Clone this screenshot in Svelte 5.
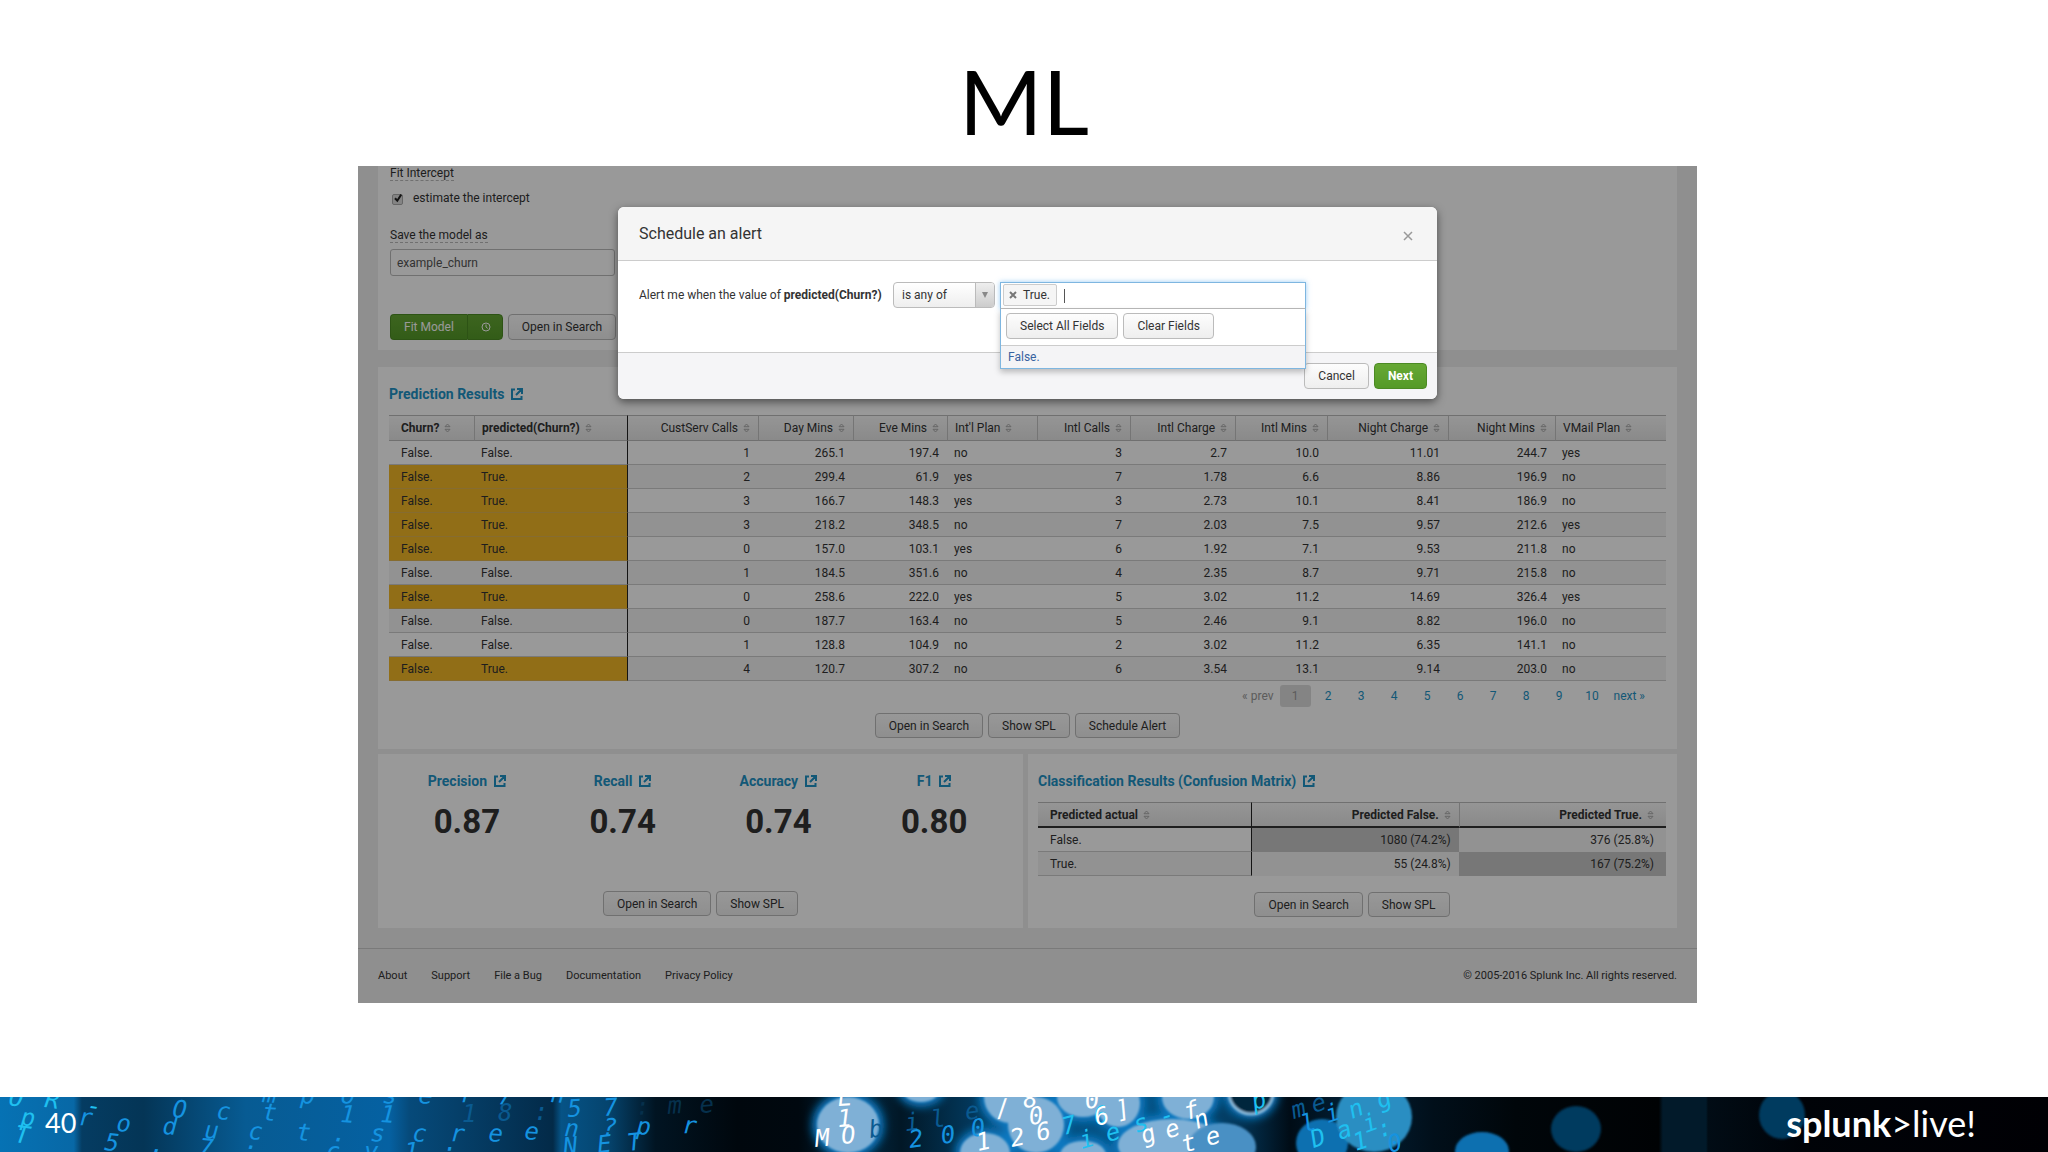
<script lang="ts">
	let modelName = $state('example_churn');
	let fitIntercept = $state(true);
	let condition = $state('is any of');
	let query = $state('');

	const columns = [
		{ label: 'Churn?', width: 85, key: true },
		{ label: 'predicted(Churn?)', width: 154, key: true },
		{ label: 'CustServ Calls', width: 130, num: true },
		{ label: 'Day Mins', width: 95, num: true },
		{ label: 'Eve Mins', width: 94, num: true },
		{ label: "Int'l Plan", width: 90 },
		{ label: 'Intl Calls', width: 93, num: true },
		{ label: 'Intl Charge', width: 105, num: true },
		{ label: 'Intl Mins', width: 92, num: true },
		{ label: 'Night Charge', width: 121, num: true },
		{ label: 'Night Mins', width: 107, num: true },
		{ label: 'VMail Plan', width: 111 }
	];

	const rows = [
		['False.', 'False.', '1', '265.1', '197.4', 'no', '3', '2.7', '10.0', '11.01', '244.7', 'yes'],
		['False.', 'True.', '2', '299.4', '61.9', 'yes', '7', '1.78', '6.6', '8.86', '196.9', 'no'],
		['False.', 'True.', '3', '166.7', '148.3', 'yes', '3', '2.73', '10.1', '8.41', '186.9', 'no'],
		['False.', 'True.', '3', '218.2', '348.5', 'no', '7', '2.03', '7.5', '9.57', '212.6', 'yes'],
		['False.', 'True.', '0', '157.0', '103.1', 'yes', '6', '1.92', '7.1', '9.53', '211.8', 'no'],
		['False.', 'False.', '1', '184.5', '351.6', 'no', '4', '2.35', '8.7', '9.71', '215.8', 'no'],
		['False.', 'True.', '0', '258.6', '222.0', 'yes', '5', '3.02', '11.2', '14.69', '326.4', 'yes'],
		['False.', 'False.', '0', '187.7', '163.4', 'no', '5', '2.46', '9.1', '8.82', '196.0', 'no'],
		['False.', 'False.', '1', '128.8', '104.9', 'no', '2', '3.02', '11.2', '6.35', '141.1', 'no'],
		['False.', 'True.', '4', '120.7', '307.2', 'no', '6', '3.54', '13.1', '9.14', '203.0', 'no']
	];

	const stats = [
		{ label: 'Precision', value: '0.87' },
		{ label: 'Recall', value: '0.74' },
		{ label: 'Accuracy', value: '0.74' },
		{ label: 'F1', value: '0.80' }
	];

	const pages = [2, 3, 4, 5, 6, 7, 8, 9, 10];
	const footerLinks = ['About', 'Support', 'File a Bug', 'Documentation', 'Privacy Policy'];

	// log characters on the banner artwork: text, x and baseline of each glyph, tilt, tone
	const glyphs = [
		{ t: 'OR-', x: '8 44 86', y: '8 10 16', r: 8, c: 'cyan' },
		{ t: 'mposer/n', x: '262 300 340 382 418 460 500 550', y: '5 6 6 6 6 5 5 5', r: 4, c: 'blue' },
		{ t: 'Oct', x: '172 216 262', y: '20 22 23', r: 4, c: 'blue' },
		{ t: '11', x: '340 380', y: '25', r: 4, c: 'blue' },
		{ t: '18:', x: '462 498 534', y: '25 24 23', r: 0, c: 'deep' },
		{ t: '57', x: '568 604', y: '20 19', r: -4, c: 'blue' },
		{ t: ':me', x: '636 668 700', y: '18 17 16', r: -4, c: 'faint' },
		{ t: 'p', x: '20', y: '28', r: 6, c: 'cyan' },
		{ t: 'roduct.screen?pr', x: '78 116 162 204 248 296 332 370 412 450 488 524 564 602 636 682', y: '28 34 37 41 42 43 44 44 44 44 44 42 39 38 37 36', r: 4, c: 'blue' },
		{ t: 'T', x: '14', y: '45', r: 8, c: 'cyan' },
		{ t: '5.7:', x: '104 150 198 242', y: '53 55 58 60', r: 6, c: 'blue' },
		{ t: 'cy1:', x: '326 364 404 442', y: '63', r: 0, c: 'blue' },
		{ t: 'NET', x: '564 598 628', y: '58 56 54', r: -6, c: 'blue' },
		{ t: 'bile', x: '870 906 932 966', y: '41 34 31 23', r: -8, c: 'deep' },
		{ t: '200', x: '910 942 972', y: '51 47 40', r: -8, c: 'blue' },
		{ t: '76', x: '1064 1096', y: '38 28', r: -14, c: 'cyan' },
		{ t: 'ies-', x: '1082 1108 1136 1162', y: '52 45 36 28', r: -16, c: 'cyan' },
		{ t: 'p', x: '1254', y: '13', r: -16, c: 'cyan' },
		{ t: 'me', x: '1294 1314', y: '22 16', r: -18, c: 'deep' },
		{ t: 'li', x: '1304 1328', y: '36 26', r: -18, c: 'blue' },
		{ t: 'Dai', x: '1314 1340 1366', y: '51 43 36', r: -20, c: 'cyan' },
		{ t: 'ng', x: '1352 1380', y: '22 12', r: -22, c: 'cyan' },
		{ t: '1:', x: '1356 1380', y: '54 41', r: -18, c: 'cyan' },
		{ t: '0', x: '1390', y: '56', r: -16, c: 'blue' },
		{ t: 'L', x: '838', y: '9', r: -4, c: 'white' },
		{ t: '1', x: '838', y: '30', r: -4, c: 'white' },
		{ t: 'MO', x: '816 842', y: '50 47', r: -6, c: 'white' },
		{ t: '/8', x: '997 1024', y: '20 11', r: -8, c: 'white' },
		{ t: '0', x: '1030', y: '28', r: -8, c: 'white' },
		{ t: '26', x: '1012 1038', y: '50 44', r: -12, c: 'white' },
		{ t: '1', x: '978', y: '54', r: -12, c: 'white' },
		{ t: '0', x: '1086', y: '12', r: -8, c: 'white' },
		{ t: '6]', x: '1097 1118', y: '29 22', r: -16, c: 'white' },
		{ t: 'f', x: '1186', y: '23', r: -14, c: 'white' },
		{ t: 'gen', x: '1144 1168 1197', y: '47 42 32', r: -20, c: 'white' },
		{ t: 'te', x: '1184 1208', y: '56 49', r: -16, c: 'white' }
	];
	const bubbles = [
		[848, 28, 31, 28, 'pale'], [921, -8, 19, 13, 'pale'], [1010, 0, 26, 26, 'pale'],
		[1036, 28, 28, 28, 'pale'], [1083, 0, 26, 20, 'pale'], [1118, 6, 22, 24, 'pale'],
		[985, 56, 25, 20, 'pale'], [1083, 58, 23, 14, 'pale'], [1188, 0, 26, 22, 'pale'],
		[1172, 48, 54, 26, 'pale'], [1222, 50, 34, 24, 'haze'], [1251, -4, 22, 21, 'ring'],
		[1322, 46, 26, 24, 'mid'], [1374, 20, 38, 35, 'teal'], [1482, 54, 27, 19, 'mid'],
		[1576, 32, 25, 23, 'dark'], [1782, 18, 23, 24, 'dark']
	];
</script>

{#snippet external()}
	<svg class="external" viewBox="0 0 12 12" aria-hidden="true">
		<path d="M4 1.5H1v9.5h9.5V8M6 1h5v5M11 1L5 7" />
	</svg>
{/snippet}

{#snippet sorter()}
	<svg class="sorter" viewBox="0 0 7 10" aria-hidden="true">
		<path d="M1 3.7L3.5 1 6 3.7zM1 6.3L3.5 9 6 6.3z" />
	</svg>
{/snippet}

<div class="slide">
	<h1>ML</h1>

	<div class="stage">
		<div class="app">
			<section class="panel form-panel">
				<div class="caption">Fit Intercept</div>
				<label class="check">
					<input type="checkbox" bind:checked={fitIntercept} />
					<svg viewBox="0 0 12 12" aria-hidden="true"><path d="M3 6.2l2.3 2.5L9.2 2.6" /></svg>
					estimate the intercept
				</label>
				<label class="caption model-label" for="model">Save the model as</label>
				<input class="model-input" id="model" type="text" bind:value={modelName} />
				<div class="form-actions">
					<div class="btn-group">
						<button class="btn primary" type="button">Fit Model</button>
						<button class="btn primary clock" type="button" aria-label="Schedule training">
							<svg viewBox="0 0 10 10" aria-hidden="true"><circle cx="5" cy="5" r="4" /><path d="M5 2.5V5l1.7 1.4" /></svg>
						</button>
					</div>
					<button class="btn" type="button">Open in Search</button>
				</div>
			</section>

			<section class="panel results">
				<h2><a href="#results">Prediction Results {@render external()}</a></h2>
				<table>
					<colgroup>
						{#each columns as col}
							<col style="width: {col.width}px" />
						{/each}
					</colgroup>
					<thead>
						<tr>
							{#each columns as col}
								<th class:key={col.key} class:num={col.num}>{col.label} {@render sorter()}</th>
							{/each}
						</tr>
					</thead>
					<tbody>
						{#each rows as row}
							<tr>
								{#each row as cell, i}
									<td class:num={columns[i].num} class:hit={i < 2 && row[0] !== row[1]}>{cell}</td>
								{/each}
							</tr>
						{/each}
					</tbody>
				</table>
				<nav class="pager" aria-label="Pages">
					<span class="prev">« prev</span>
					<span class="page current">1</span>
					{#each pages as page}
						<a class="page" href="#page-{page}">{page}</a>
					{/each}
					<a class="next" href="#page-2">next »</a>
				</nav>
				<div class="actions">
					<button class="btn" type="button">Open in Search</button>
					<button class="btn" type="button">Show SPL</button>
					<button class="btn" type="button">Schedule Alert</button>
				</div>
			</section>

			<div class="split">
				<section class="panel">
					<div class="stats">
						{#each stats as stat}
							<div class="stat">
								<h2><a href="#{stat.label}">{stat.label} {@render external()}</a></h2>
								<div class="value">{stat.value}</div>
							</div>
						{/each}
					</div>
					<div class="actions">
						<button class="btn" type="button">Open in Search</button>
						<button class="btn" type="button">Show SPL</button>
					</div>
				</section>
				<section class="panel">
					<h2><a href="#confusion">Classification Results (Confusion Matrix) {@render external()}</a></h2>
					<table class="matrix">
						<thead>
							<tr>
								<th class="key first">Predicted actual {@render sorter()}</th>
								<th class="key num">Predicted False. {@render sorter()}</th>
								<th class="key num">Predicted True. {@render sorter()}</th>
							</tr>
						</thead>
						<tbody>
							<tr><td>False.</td><td class="num heavy">1080 (74.2%)</td><td class="num light">376 (25.8%)</td></tr>
							<tr><td>True.</td><td class="num light">55 (24.8%)</td><td class="num heavy">167 (75.2%)</td></tr>
						</tbody>
					</table>
					<div class="actions">
						<button class="btn" type="button">Open in Search</button>
						<button class="btn" type="button">Show SPL</button>
					</div>
				</section>
			</div>

			<footer class="app-footer">
				{#each footerLinks as link}
					<a href="#footer">{link}</a>
				{/each}
				<span>© 2005-2016 Splunk Inc. All rights reserved.</span>
			</footer>

			<div class="backdrop"></div>

			<div class="modal" role="dialog" aria-labelledby="modal-title">
				<header>
					<h3 id="modal-title">Schedule an alert</h3>
					<button class="close" type="button" aria-label="Close">
						<svg viewBox="0 0 10 10" aria-hidden="true"><path d="M1 1l8 8M9 1L1 9" /></svg>
					</button>
				</header>
				<div class="modal-body">
					<label for="condition">Alert me when the value of <strong>predicted(Churn?)</strong></label>
					<div class="select">
						<select id="condition" bind:value={condition}>
							<option>is any of</option>
							<option>is not any of</option>
						</select>
						<span class="arrow"><svg viewBox="0 0 6 6" aria-hidden="true"><path d="M0 0h6L3 6z" /></svg></span>
					</div>
					<div class="multi">
						<div class="tokens">
							<span class="token">
								<button type="button" aria-label="Remove True.">
									<svg viewBox="0 0 8 8" aria-hidden="true"><path d="M1 1l6 6M7 1L1 7" /></svg>
								</button>
								True.
							</span>
							<span class="caret"></span>
							<input type="text" aria-label="Values" bind:value={query} />
						</div>
						<div class="menu">
							<div class="menu-actions">
								<button class="btn" type="button">Select All Fields</button>
								<button class="btn" type="button">Clear Fields</button>
							</div>
							<button class="option" type="button">False.</button>
						</div>
					</div>
				</div>
				<div class="modal-footer">
					<button class="btn" type="button">Cancel</button>
					<button class="btn primary next-btn" type="button">Next</button>
				</div>
			</div>
		</div>
	</div>

	<div class="banner">
		<svg class="art" viewBox="0 0 2048 55" preserveAspectRatio="xMidYMid slice" aria-hidden="true">
			<defs>
				<linearGradient id="sky">
					<stop offset="0" stop-color="#0672b4" />
					<stop offset=".036" stop-color="#0868a6" />
					<stop offset=".04" stop-color="#053c62" />
					<stop offset=".07" stop-color="#043556" />
					<stop offset=".12" stop-color="#075b93" />
					<stop offset=".19" stop-color="#0561a2" />
					<stop offset=".2" stop-color="#064a7a" />
					<stop offset=".27" stop-color="#032a48" />
					<stop offset=".274" stop-color="#065386" />
					<stop offset=".297" stop-color="#05446e" />
					<stop offset=".32" stop-color="#011422" />
					<stop offset=".36" stop-color="#00070d" />
					<stop offset=".39" stop-color="#00080f" />
					<stop offset=".42" stop-color="#022a44" />
					<stop offset=".44" stop-color="#011726" />
					<stop offset=".49" stop-color="#034672" />
					<stop offset=".55" stop-color="#04558a" />
					<stop offset=".6" stop-color="#033c62" />
					<stop offset=".63" stop-color="#000c16" />
					<stop offset=".66" stop-color="#022138" />
					<stop offset=".7" stop-color="#010f1a" />
					<stop offset=".74" stop-color="#00060a" />
					<stop offset=".81" stop-color="#000204" />
					<stop offset=".812" stop-color="#021a2a" />
					<stop offset=".833" stop-color="#021a2a" />
					<stop offset=".834" stop-color="#010c15" />
					<stop offset=".88" stop-color="#000308" />
					<stop offset="1" stop-color="#000004" />
				</linearGradient>
				<filter id="soft" x="-20%" y="-20%" width="140%" height="140%"><feGaussianBlur stdDeviation="1" /></filter>
				<filter id="glow" x="-20%" y="-50%" width="140%" height="200%"><feGaussianBlur stdDeviation="4" /></filter>
			</defs>
			<rect width="2048" height="55" fill="url(#sky)" />
			<g filter="url(#glow)">
				{#each bubbles as [cx, cy, rx, ry, tone]}
					{#if tone === 'pale' || tone === 'ring'}
						<ellipse class="halo" {cx} {cy} {rx} {ry} />
					{/if}
				{/each}
			</g>
			<g filter="url(#soft)">
				{#each bubbles as [cx, cy, rx, ry, tone]}
					<ellipse class={tone} {cx} {cy} {rx} {ry} />
				{/each}
			</g>
			{#each glyphs as g}
				<text class={g.c} x={g.x} y={g.y} rotate={g.r}>{g.t}</text>
			{/each}
		</svg>
		<span class="slide-no">40</span>
		<span class="logo"><b>splunk</b>&gt;live!</span>
	</div>
</div>

<style>
	:global(body) {
		background: #fff;
	}

	.slide {
		display: flex;
		flex-direction: column;
		min-height: 100vh;
		font: 12px/16px Roboto, "Liberation Sans", sans-serif;
		color: #333;
	}

	.slide * {
		box-sizing: border-box;
	}

	h1 {
		margin: 0;
		padding-top: 48px;
		height: 166px;
		font: 400 90px/104px Lato, sans-serif;
		color: #000;
		text-align: center;
	}

	h2 {
		margin: 0 0 11px;
		font-size: 14px;
		line-height: 20px;
		font-weight: 700;
	}

	h2 a {
		display: inline-flex;
		align-items: center;
		gap: 7px;
	}

	a {
		color: #1e93c6;
		text-decoration: none;
	}

	button,
	input,
	select {
		font: inherit;
		color: inherit;
	}

	.stage {
		padding: 0 351px 0 358px;
	}

	.app {
		position: relative;
		background: #eee;
	}

	.panel {
		margin: 0 20px;
		padding: 17px 11px 11px;
		background: #fff;
	}

	.form-panel {
		padding: 0 12px 10px;
		margin-bottom: 17px;
	}

	.caption {
		display: table;
		line-height: 14px;
		border-bottom: 1px dashed #bbb;
	}

	.check {
		display: flex;
		align-items: center;
		position: relative;
		margin-top: 9px;
	}

	.check input {
		appearance: none;
		width: 11px;
		height: 11px;
		margin: 2px 10px 0 2px;
		border: 1px solid #aaa;
		border-radius: 2px;
		background: #ddd;
	}

	.check svg {
		position: absolute;
		left: 2px;
		top: 2px;
		width: 12px;
		fill: none;
		stroke: #222;
		stroke-width: 2;
	}

	.model-label {
		margin-top: 22px;
	}

	.model-input {
		width: 225px;
		height: 27px;
		margin-top: 6px;
		padding: 0 6px;
		border: 1px solid #bbb;
		border-radius: 3px;
		background: #fff;
		color: #555;
		display: block;
	}

	.form-actions {
		display: flex;
		gap: 5px;
		margin-top: 38px;
	}

	.btn-group {
		display: flex;
	}

	.btn {
		height: 26px;
		padding: 0 13px;
		border: 1px solid #bbb;
		border-radius: 4px;
		background: linear-gradient(#fdfdfd, #eee);
		color: #333;
		white-space: nowrap;
	}

	.btn.primary {
		border-color: #4c8a24;
		background: linear-gradient(#66a834, #559a28);
		color: #fff;
	}

	.btn-group .btn:first-child {
		border-radius: 4px 0 0 4px;
		border-right: 0;
	}

	.btn-group .clock {
		width: 36px;
		border-radius: 0 4px 4px 0;
	}

	.clock svg {
		display: block;
		width: 10px;
		fill: none;
		stroke: #fff;
	}

	.external {
		width: 12px;
		height: 12px;
		fill: none;
		stroke: #1e93c6;
		stroke-width: 2;
	}

	table {
		width: 100%;
		table-layout: fixed;
		border-collapse: separate;
		border-spacing: 0;
		white-space: nowrap;
	}

	th {
		height: 26px;
		padding: 0 8px 0 7px;
		border-top: 1px solid #bbb;
		border-bottom: 1px solid #bbb;
		border-left: 1px solid #c4c4c4;
		background: linear-gradient(#f9f9f9, #e6e6e6);
		font-weight: 400;
		text-align: left;
	}

	td {
		height: 24px;
		padding: 0 8px 0 7px;
		border-bottom: 1px solid #ccc;
	}

	th:first-child,
	td:first-child {
		padding-left: 12px;
		border-left: 0;
	}

	.key {
		font-weight: 700;
	}

	tbody tr:nth-child(even) td {
		background: #f3f3f3;
	}

	tbody tr td.hit {
		background: #f2b827;
		border-bottom-color: #e0b450;
	}

	.num {
		text-align: right;
	}

	.results th:nth-child(2),
	.results td:nth-child(2),
	.matrix th:first-child,
	.matrix td:first-child {
		border-right: 1px solid #222;
	}

	.results th:nth-child(3),
	.matrix th:nth-child(2) {
		border-left: 0;
	}

	.sorter {
		width: 7px;
		height: 10px;
		margin-left: 2px;
		fill: none;
		stroke: #aaa;
		vertical-align: -1px;
	}

	.pager {
		display: flex;
		justify-content: flex-end;
		gap: 2px;
		margin-top: 4px;
		padding-right: 21px;
		line-height: 22px;
	}

	.page {
		width: 31px;
		text-align: center;
	}

	.current {
		border-radius: 3px;
		background: #ddd;
		color: #999;
	}

	.prev {
		margin-right: 4px;
		color: #999;
	}

	.next {
		margin-left: 4px;
	}

	.actions {
		display: flex;
		justify-content: center;
		gap: 5px;
		margin-top: 6px;
	}

	.actions .btn {
		height: 25px;
	}

	.split {
		display: grid;
		grid-template-columns: 645fr 649fr;
		gap: 5px;
		margin: 5px 20px 20px;
	}

	.split .panel {
		margin: 0;
	}

	.split .panel:last-child {
		padding-left: 10px;
	}

	.stats {
		display: grid;
		grid-template-columns: repeat(4, 1fr);
		text-align: center;
	}

	.value {
		font-size: 33px;
		line-height: 40px;
		font-weight: 700;
	}

	.stats + .actions {
		margin-top: 49px;
	}

	.matrix th,
	.matrix .first {
		border-bottom: 2px solid #333;
	}

	.matrix .first {
		width: 34%;
	}

	.matrix th:last-child,
	.matrix td:last-child {
		padding-right: 12px;
	}

	.matrix tbody tr td.light {
		background: #f3f3f3;
		border-bottom-color: #f3f3f3;
	}

	.matrix tbody tr td.heavy {
		background: #c6c6c6;
		border-bottom-color: #c6c6c6;
	}

	.matrix + .actions {
		margin-top: 16px;
	}

	.app-footer {
		display: flex;
		align-items: center;
		gap: 24px;
		height: 55px;
		padding: 0 20px;
		border-top: 1px solid #ccc;
		font-size: 11px;
	}

	.app-footer a {
		color: #333;
	}

	.app-footer span {
		margin-left: auto;
	}

	.backdrop {
		position: absolute;
		inset: 0;
		background: rgba(0, 0, 0, 0.4);
	}

	.modal {
		position: absolute;
		top: 41px;
		left: 260px;
		right: 260px;
		border-radius: 6px;
		background: #fff;
		box-shadow: 0 3px 9px rgba(0, 0, 0, 0.5);
	}

	.modal header {
		display: flex;
		align-items: center;
		justify-content: space-between;
		height: 54px;
		padding: 0 24px 0 21px;
		border-bottom: 1px solid #ccc;
		border-radius: 6px 6px 0 0;
		background: #f5f5f5;
	}

	h3 {
		margin: 0;
		font-size: 16px;
		line-height: 20px;
		font-weight: 400;
	}

	.close {
		padding: 4px 0 0;
		border: 0;
		background: none;
	}

	.close svg {
		display: block;
		width: 10px;
		fill: none;
		stroke: #999;
		stroke-width: 1.5;
	}

	.modal-body {
		display: flex;
		align-items: flex-start;
		gap: 5px;
		height: 91px;
		padding: 21px 21px 0;
	}

	.modal-body label {
		min-width: 249px;
		line-height: 26px;
		white-space: nowrap;
	}

	.select {
		position: relative;
		width: 102px;
	}

	select {
		appearance: none;
		width: 100%;
		height: 26px;
		padding: 0 8px;
		border: 1px solid #bbb;
		border-radius: 4px;
		background: linear-gradient(#fff, #eee);
	}

	.arrow {
		position: absolute;
		top: 1px;
		right: 1px;
		bottom: 1px;
		width: 19px;
		padding: 3px 0 0 6px;
		border-left: 1px solid #bbb;
		border-radius: 0 3px 3px 0;
		background: linear-gradient(#eee, #ccc);
		pointer-events: none;
	}

	.arrow svg {
		width: 6px;
		fill: #888;
	}

	.multi {
		position: relative;
		width: 306px;
	}

	.tokens {
		display: flex;
		align-items: center;
		height: 27px;
		padding: 0 2px 2px;
		border: 1px solid #7eb6e0;
		border-bottom-color: #bbb;
		background: #fff;
		box-shadow: 0 0 5px rgba(82, 168, 236, 0.6);
	}

	.token {
		display: flex;
		align-items: center;
		gap: 6px;
		height: 22px;
		padding: 0 6px 0 5px;
		border: 1px solid #ccc;
		border-radius: 2px;
		background: #f5f5f5;
	}

	.token button {
		padding: 0;
		border: 0;
		background: none;
	}

	.token svg {
		display: block;
		width: 8px;
		stroke: #777;
		stroke-width: 2;
	}

	.caret {
		width: 1px;
		height: 14px;
		margin: 3px 0 0 7px;
		background: #555;
	}

	.tokens input {
		flex: 1;
		min-width: 0;
		border: 0;
		outline: 0;
		background: none;
	}

	.menu {
		position: absolute;
		top: 27px;
		left: 0;
		right: 0;
		border: 1px solid #7eb6e0;
		border-top: 0;
		background: #fff;
		box-shadow: 0 3px 6px rgba(0, 0, 0, 0.25);
	}

	.menu-actions {
		display: flex;
		gap: 5px;
		padding: 4px 5px 6px;
	}

	.option {
		display: block;
		width: 100%;
		height: 23px;
		padding: 0 7px;
		border: 0;
		border-top: 1px solid #ccc;
		background: #f4f4f6;
		color: #3863a0;
		text-align: left;
	}

	.modal-footer {
		display: flex;
		justify-content: flex-end;
		gap: 5px;
		padding: 10px;
		border-top: 1px solid #ccc;
		border-radius: 0 0 6px 6px;
		background: #f5f5f7;
	}

	.next-btn {
		font-weight: 700;
	}

	.banner {
		position: relative;
		display: flex;
		align-items: center;
		justify-content: space-between;
		height: 55px;
		margin-top: auto;
		padding: 0 72px 4px 45px;
		overflow: hidden;
		background: #000;
		font-family: Lato, sans-serif;
		color: #fff;
	}

	.art {
		position: absolute;
		inset: 0;
		width: 100%;
		height: 100%;
		font: oblique 24px "DejaVu Sans Mono", monospace;
	}

	.slide-no,
	.logo {
		position: relative;
		font-size: 27px;
		line-height: 48px;
	}

	.logo {
		font-size: 36px;
	}

	.halo { fill: #0b78c0; stroke: #0b78c0; stroke-width: 10; }
	.pale { fill: #7fb0d6; }
	.haze { fill: #4a90c4; }
	.mid { fill: #0b6fb0; }
	.teal { fill: #2a8ec2; }
	.dark { fill: #063a5e; }
	.ring { fill: #04263e; stroke: #8ab8d8; stroke-width: 3; }
	text.white { fill: #fff; }
	text.cyan { fill: #1fc0f0; }
	text.blue { fill: #1593e0; }
	text.deep { fill: #0a5a90; }
	text.faint { fill: #06304c; }
</style>
